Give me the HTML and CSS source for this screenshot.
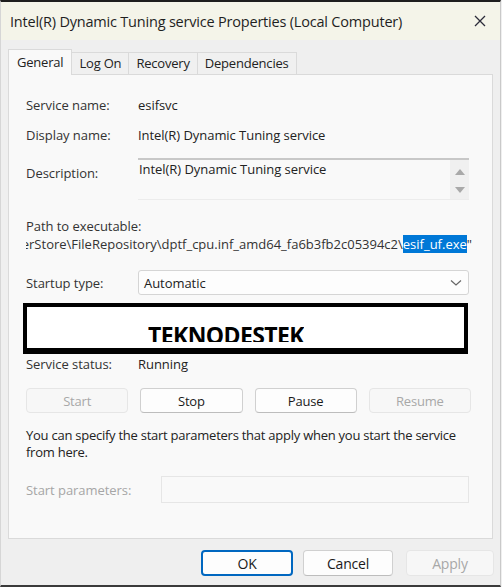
FILE: index.html
```html
<!DOCTYPE html>
<html lang="en">
<head>
  <meta charset="UTF-8">
  <title>Intel(R) Dynamic Tuning service Properties (Local Computer)</title>
  <link rel="stylesheet" href="styles.css">
</head>
<body>
  <div class="window">
    <div class="titlebar">
      <span class="title">Intel(R) Dynamic Tuning service Properties (Local Computer)</span>
      <svg class="close" width="12" height="12" viewBox="0 0 12 12">
        <path d="M1 1 L11 11 M11 1 L1 11" stroke="#2b2b3a" stroke-width="1.3" fill="none"/>
      </svg>
    </div>

    <div class="tabs">
      <div class="tab active">General</div>
      <div class="tab">Log On</div>
      <div class="tab">Recovery</div>
      <div class="tab">Dependencies</div>
    </div>

    <div class="panel">
      <div class="row first">
        <span class="label">Service name:</span>
        <span class="value">esifsvc</span>
      </div>
      <div class="row">
        <span class="label">Display name:</span>
        <span class="value">Intel(R) Dynamic Tuning service</span>
      </div>
      <div class="row desc-row">
        <span class="label">Description:</span>
        <div class="textarea">
          <span class="textarea-text">Intel(R) Dynamic Tuning service</span>
          <div class="scroll">
            <span class="arrow up"></span>
            <span class="arrow down"></span>
          </div>
        </div>
      </div>

      <div class="path-label">Path to executable:</div>
      <div class="path">
        <span class="path-text">"C:\WINDOWS\System32\DriverStore\FileRepository\dptf_cpu.inf_amd64_fa6b3fb2c05394c2\<span class="selected">esif_uf.exe</span>"</span>
      </div>

      <div class="row startup-row">
        <span class="label">Startup type:</span>
        <div class="combo">
          <span>Automatic</span>
          <svg width="12" height="8" viewBox="0 0 12 8">
            <path d="M1 1.5 L6 6 L11 1.5" stroke="#666" stroke-width="1.2" fill="none"/>
          </svg>
        </div>
      </div>

      <div class="stamp"><span class="stamp-text">TEKNODESTEK</span></div>

      <div class="row status-row">
        <span class="label">Service status:</span>
        <span class="value">Running</span>
      </div>

      <div class="buttons">
        <button class="btn" disabled>Start</button>
        <button class="btn">Stop</button>
        <button class="btn">Pause</button>
        <button class="btn" disabled>Resume</button>
      </div>

      <p class="note">You can specify the start parameters that apply when you start the service from here.</p>

      <div class="row params-row">
        <span class="label muted">Start parameters:</span>
        <div class="params-box"></div>
      </div>
    </div>

    <div class="footer">
      <button class="btn footer-btn primary">OK</button>
      <button class="btn footer-btn cancel">Cancel</button>
      <button class="btn footer-btn apply" disabled>Apply</button>
    </div>
  </div>
</body>
</html>
```

FILE: styles.css
```css
html, body {
  margin: 0;
  padding: 0;
  height: 100%;
  overflow: hidden;
  background: #efefef;
  font-family: "Open Sans", "Noto Sans", sans-serif;
  color: #222;
}

.window {
  box-sizing: border-box;
  height: 587px;
  width: 501px;
  border-top: 2px solid #1e1e1e;
  border-bottom: 2px solid #3a3a3a;
  border-right: 1px solid #c9c9c9;
  border-left: 1px solid #d6d6d6;
  background: #efefef;
}

.titlebar {
  height: 38px;
  background: #f4f4e9;
  display: flex;
  align-items: center;
  justify-content: space-between;
  padding: 0 14px 0 9px;
}

.title {
  font-size: 14.5px;
  color: #1f1f1f;
  letter-spacing: -0.2px;
}

/* tabs */
.tabs {
  display: flex;
  align-items: flex-end;
  height: 26px;
  margin-top: 8px;
  padding-left: 8px;
  font-size: 13px;
  letter-spacing: -0.2px;
}

.tab {
  height: 21px;
  line-height: 21px;
  padding: 0 7px;
  border: 1px solid #dadada;
  border-bottom: none;
  margin-left: -1px;
  background: #f0f0f0;
  color: #222;
}

.tab.active {
  height: 25px;
  line-height: 24px;
  padding: 0 8px;
  background: #f9f9f9;
  position: relative;
  z-index: 1;
  margin-bottom: -1px;
}

/* main panel */
.panel {
  box-sizing: border-box;
  margin: 0 7px 0 7px;
  height: 465px;
  border: 1px solid #dadada;
  background: #f9f9f9;
  padding: 0 23px 0 17px;
  font-size: 13px;
  letter-spacing: -0.05px;
}

.row {
  display: flex;
  align-items: flex-start;
  line-height: 18px;
  margin-top: 12px;
}

.row.first {
  margin-top: 21px;
}

.label {
  width: 112px;
  flex: none;
  color: #333;
}

.label.muted {
  width: 135px;
  color: #a6a6a6;
}

.value {
  color: #222;
}

.desc-row {
  margin-top: 14px;
}

.desc-row .label {
  padding-top: 6px;
}

.textarea {
  box-sizing: border-box;
  width: 333px;
  height: 42px;
  border-top: 2px solid #c8c8c8;
  border-bottom: 1px solid #ececec;
  background: #f9f9f9;
  display: flex;
  justify-content: space-between;
}

.textarea-text {
  padding: 0 0 0 1px;
  line-height: 18px;
}

.scroll {
  width: 19px;
  background: #f0f0f0;
  display: flex;
  flex-direction: column;
  align-items: center;
  justify-content: space-between;
  padding: 9px 0 6px;
}

.arrow {
  width: 0;
  height: 0;
  border-left: 5px solid transparent;
  border-right: 5px solid transparent;
}

.arrow.up {
  border-bottom: 6px solid #a9a9a9;
}

.arrow.down {
  border-top: 6px solid #a9a9a9;
}

.path-label {
  margin-top: 17px;
  line-height: 18px;
  color: #333;
}

.path {
  width: 446px;
  display: flex;
  justify-content: flex-end;
  overflow: hidden;
  white-space: nowrap;
  line-height: 18px;
  color: #333;
  letter-spacing: 0;
}

.selected {
  background: #0078d7;
  color: #fff;
}

.startup-row {
  margin-top: 17px;
  align-items: center;
}

.combo {
  box-sizing: border-box;
  width: 333px;
  height: 25px;
  border: 1px solid #d5d5d5;
  border-radius: 3px;
  background: #fdfdfd;
  display: flex;
  align-items: center;
  justify-content: space-between;
  padding: 0 6px 0 5px;
}

.stamp {
  box-sizing: border-box;
  width: 445px;
  height: 51px;
  margin: 8px 0 0 -3px;
  border: 4px solid #000;
  border-bottom-width: 6px;
  background: #fff;
  padding: 17px 0 0 121px;
}

.stamp-text {
  display: block;
  width: max-content;
  height: 18px;
  overflow: hidden;
  font-family: "Open Sans", sans-serif;
  font-weight: 700;
  font-size: 23px;
  line-height: 23px;
  letter-spacing: -0.6px;
  color: #000;
}

.status-row {
  margin-top: 1px;
}

.buttons {
  display: grid;
  grid-template-columns: repeat(4, 1fr);
  gap: 12px;
  width: 445px;
  margin-top: 15px;
}

.btn {
  height: 25px;
  font-family: inherit;
  font-size: 13px;
  letter-spacing: -0.2px;
  color: #1a1a1a;
  background: #fdfdfd;
  border: 1px solid #d0d0d0;
  border-bottom-color: #bdbdbd;
  border-radius: 4px;
  padding: 0;
}

.btn:disabled {
  color: #a8a8a8;
  background: #f7f7f7;
  border-color: #e6e6e6;
}

.note {
  margin: 14px -10px 0 0;
  line-height: 17px;
  color: #222;
  letter-spacing: -0.25px;
}

.params-row {
  margin-top: 15px;
  align-items: center;
}

.params-box {
  width: 310px;
  height: 27px;
  box-sizing: border-box;
  border: 1px solid #e6e6e6;
  background: #f9f9f9;
}

/* bottom buttons */
.footer {
  display: flex;
  justify-content: flex-end;
  padding: 11px 6px 0 0;
}

.footer-btn {
  height: 26px;
  font-size: 14px;
}

.footer-btn.primary {
  width: 92px;
  border: 2px solid #0067c0;
}

.footer-btn.cancel {
  width: 90px;
  margin-left: 10px;
}

.footer-btn.apply {
  width: 88px;
  margin-left: 13px;
}
```
